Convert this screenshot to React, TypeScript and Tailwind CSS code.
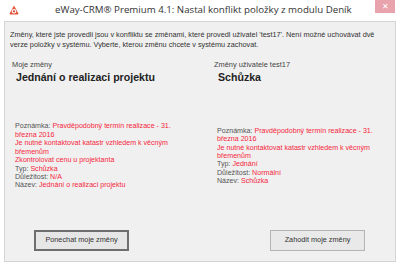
const UI = "font-['Liberation_Sans',Arial,sans-serif]"

function Logo() {
  return (
    <svg width="10" height="10" viewBox="0 0 10 10">
      <path d="M5 0.6 L9.4 8.6 Q9.6 9.4 8.8 9.4 L1.2 9.4 Q0.4 9.4 0.6 8.6 Z" fill="#e2553a" />
      <circle cx="5" cy="6.3" r="2.2" fill="#fff" />
      <circle cx="5" cy="6.3" r="1.1" fill="#c8402a" />
    </svg>
  )
}

function Detail({ label, lines }: { label: string; lines: string[] }) {
  return (
    <div>
      <span className="text-[#555]">{label}: </span>
      {lines.map((l, i) => (
        <span key={i} className="text-[#f5263c]">
          {i > 0 && <br />}
          {l}
        </span>
      ))}
    </div>
  )
}

export default function App() {
  return (
    <div className={`w-[400px] h-[266px] bg-white flex flex-col ${UI}`}>
      {/* Title bar */}
      <div className="h-[21px] flex items-start relative">
        <div className="pl-[9px] pt-[5px]">
          <Logo />
        </div>
        <div className="pl-[36px] pt-[3px] text-[9.7px] leading-[14px] text-[#333] font-['Open_Sans',sans-serif] whitespace-nowrap">
          eWay-CRM® Premium 4.1: Nastal konflikt položky z modulu Deník
        </div>
        <div className="absolute right-[5px] top-0 w-[20px] h-[13px] bg-[#e9a3ac] flex items-center justify-center text-white text-[8px] leading-none">
          ✕
        </div>
      </div>

      {/* Client area */}
      <div className="mx-[4px] h-[241px] border border-[#d4d4d4] bg-[#f0f0f0] flex flex-col">
        <p className="px-[5px] pt-[8px] text-[7.3px] leading-[10px] text-[#333] whitespace-nowrap">
          Změny, které jste provedli jsou v konfliktu se změnami, které provedl uživatel 'test17'. Není možné uchovávat dvě
          <br />
          verze položky v systému. Vyberte, kterou změnu chcete v systému zachovat.
        </p>

        <div className="grid grid-cols-2 mt-[9px]">
          <div className="pl-[7px]">
            <div className="text-[7.4px] text-[#444]">Moje změny</div>
            <div className="pl-[4px] pt-[1px] text-[10.6px] leading-[13px] font-bold text-[#222]">Jednání o realizaci projektu</div>
          </div>
          <div className="pl-[14px]">
            <div className="text-[7.4px] text-[#444]">Změny uživatele test17</div>
            <div className="pl-[4px] pt-[1px] text-[10.6px] leading-[13px] font-bold text-[#222]">Schůzka</div>
          </div>
        </div>

        <div className="grid grid-cols-2 h-[138px] pt-[6px] items-center text-[7.1px] leading-[8.4px]">
          <div className="pl-[10px] whitespace-nowrap">
            <Detail
              label="Poznámka"
              lines={[
                'Pravděpodobný termín realizace - 31.',
                'března 2016',
                'Je nutné kontaktovat katastr vzhledem k věcným',
                'břemenům',
                'Zkontrolovat cenu u projektanta',
              ]}
            />
            <Detail label="Typ" lines={['Schůzka']} />
            <Detail label="Důležitost" lines={['N/A']} />
            <Detail label="Název" lines={['Jednání o realizaci projektu']} />
          </div>
          <div className="pl-[17px] whitespace-nowrap">
            <Detail
              label="Poznámka"
              lines={[
                'Pravděpodobný termín realizace - 31.',
                'března 2016',
                'Je nutné kontaktovat katastr vzhledem k věcným',
                'břemenům',
              ]}
            />
            <Detail label="Typ" lines={['Jednání']} />
            <Detail label="Důležitost" lines={['Normální']} />
            <Detail label="Název" lines={['Schůzka']} />
          </div>
        </div>

        <div className="flex justify-between pl-[29px] pr-[30px] mt-[8px]">
          <button className="w-[95px] h-[21px] border-2 border-[#6e6e6e] bg-[#e6e6e6] text-[7.3px] text-[#333]">
            Ponechat moje změny
          </button>
          <button className="w-[95px] h-[21px] border border-[#b4b4b4] bg-[#e9e9e9] text-[7.3px] text-[#333]">
            Zahodit moje změny
          </button>
        </div>
      </div>
    </div>
  )
}
